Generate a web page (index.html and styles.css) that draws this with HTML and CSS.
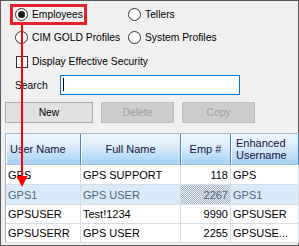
FILE: index.html
```html
<!DOCTYPE html>
<html>
<head>
<meta charset="utf-8">
<link rel="stylesheet" href="styles.css">
</head>
<body>
<div class="window">
  <div class="options">
    <label class="opt"><span class="radio checked"></span>Employees</label>
    <label class="opt"><span class="radio"></span>Tellers</label>
    <label class="opt"><span class="radio"></span>CIM GOLD Profiles</label>
    <label class="opt"><span class="radio"></span>System Profiles</label>
  </div>
  <label class="check"><span class="box"></span>Display Effective Security</label>
  <div class="search">
    <span class="search-label">Search</span>
    <div class="input"><span class="caret"></span></div>
  </div>
  <div class="buttons">
    <button class="btn btn-new">New</button>
    <button class="btn btn-off">Delete</button>
    <button class="btn btn-off">Copy</button>
  </div>
  <table class="grid">
    <colgroup>
      <col class="c1"><col class="c2"><col class="c3"><col class="c4">
    </colgroup>
    <thead>
      <tr>
        <th class="h-left h-first">User Name</th>
        <th class="h-center">Full Name</th>
        <th class="h-center">Emp #</th>
        <th class="h-left h-two">Enhanced<br>Username</th>
      </tr>
    </thead>
    <tbody>
      <tr class="r1">
        <td>GPS</td><td>GPS SUPPORT</td><td class="num">118</td><td>GPS</td>
      </tr>
      <tr class="r2 sel">
        <td>GPS1</td><td>GPS USER</td><td class="num focus">2267</td><td>GPS1</td>
      </tr>
      <tr class="r3">
        <td>GPSUSER</td><td>Test!1234</td><td class="num">9990</td><td>GPSUSER</td>
      </tr>
      <tr class="r4">
        <td>GPSUSERR</td><td>GPS USER</td><td class="num">2255</td><td>GPSUSE...</td>
      </tr>
    </tbody>
  </table>
  <svg class="annot" width="299" height="246" viewBox="0 0 299 246">
    <rect x="11.5" y="5.5" width="74" height="18" fill="none" stroke="#e8202a" stroke-width="3"/>
    <rect x="21" y="25" width="2" height="152" fill="#ff0000"/>
    <polygon points="16.5,176 27.5,176 22,187" fill="#ff0000"/>
  </svg>
</div>
</body>
</html>
```
FILE: styles.css
```css
* { box-sizing: border-box; }
html, body { margin: 0; padding: 0; }
body {
  width: 299px;
  height: 246px;
  overflow: hidden;
  font-family: "Liberation Sans", Arial, sans-serif;
}
.window {
  position: relative;
  width: 299px;
  height: 246px;
  border: 1px solid #5a5a5a;
  background: #f0f0f0;
  font-size: 10.3px;
  color: #000;
}
.options {
  display: grid;
  grid-template-columns: 113px auto;
  grid-auto-rows: 23px;
  padding: 2px 0 0 14px;
}
.opt, .check {
  display: flex;
  align-items: center;
  gap: 4px;
  white-space: nowrap;
}
.radio {
  width: 13px;
  height: 13px;
  border: 1px solid #333;
  border-radius: 50%;
  background: #fff;
  display: flex;
  align-items: center;
  justify-content: center;
  flex: none;
}
.radio.checked::after {
  content: "";
  width: 7px;
  height: 7px;
  border-radius: 50%;
  background: #1a1a1a;
}
.check {
  height: 25px;
  padding-left: 15px;
}
.box {
  width: 12px;
  height: 12px;
  border: 1px solid #333;
  background: #fff;
  flex: none;
}
.search {
  display: flex;
  align-items: center;
  height: 20px;
  margin-top: 1px;
  padding-left: 14px;
}
.search-label { width: 45px; }
.input {
  width: 180px;
  height: 20px;
  border: 1px solid #0078d7;
  background: #fff;
  padding: 2px 0 0 2px;
}
.caret {
  display: block;
  width: 1px;
  height: 13px;
  background: #000;
}
.buttons {
  display: flex;
  gap: 8px;
  margin-top: 7px;
  padding-left: 4px;
}
.btn {
  height: 21px;
  font-family: inherit;
  font-size: 10.3px;
  padding: 0;
  border: 1px solid #adadad;
  background: #e1e1e1;
  color: #000;
}
.btn-new { width: 88px; }
.btn-off {
  width: 73px;
  border-color: #bfbfbf;
  background: #cccccc;
  color: #a0a0a0;
}
.grid {
  margin: 10px 0 0 4px;
  width: 293px;
  table-layout: fixed;
  border-collapse: separate;
  border-spacing: 0;
  border-top: 1px solid #a9b8c6;
  border-left: 1px solid #a9b8c6;
  background: #fff;
  font-size: 11px;
}
.c1 { width: 75px; }
.c2 { width: 100px; }
.c3 { width: 50px; }
.c4 { width: 68px; }
.grid th {
  height: 31px;
  padding: 0;
  font-weight: normal;
  color: #14143c;
  line-height: 12.5px;
  background: linear-gradient(to bottom, #eef6fd 0%, #dcedfb 40%, #bcdcf7 75%, #a6d1f5 100%);
  border-right: 1px solid #4684c4;
  border-bottom: 1px solid #a9c4dc;
  box-shadow: inset 1px 0 0 #ffffff;
  white-space: nowrap;
  overflow: hidden;
}
.h-left { text-align: left; padding-left: 4px !important; }
.h-two { padding-left: 5px !important; }
.h-center { text-align: center; }
.grid td {
  height: 20px;
  padding: 0 0 0 2px;
  border-right: 1px solid #d6dde4;
  border-bottom: 1px solid #d6dde4;
  white-space: nowrap;
  overflow: hidden;
  line-height: 18px;
}
.grid .r3 td, .grid .r4 td { height: 19px; }
.grid td.num { text-align: right; padding: 0 2px 0 0; }
.sel td { background: #d9ebf9; color: #4f6479; }
.sel td.focus {
  background: repeating-conic-gradient(#a7b3bf 0 25%, #e6f1fb 0 50%) 0 0 / 2px 2px;
}
.annot {
  position: absolute;
  left: -1px;
  top: -1px;
  pointer-events: none;
}
```
